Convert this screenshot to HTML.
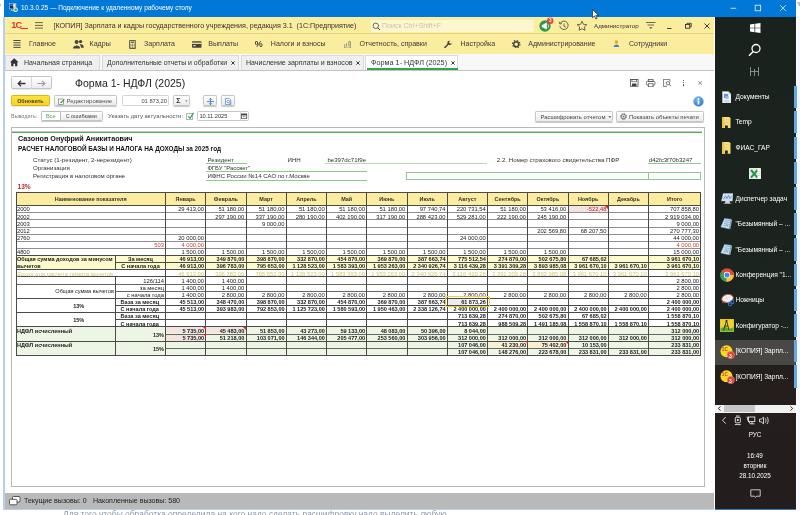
<!DOCTYPE html>
<html lang="ru"><head><meta charset="utf-8"><title>Форма 1- НДФЛ (2025)</title>
<style>
html,body{margin:0;padding:0;background:#fff}
body{width:800px;height:515px;position:relative;overflow:hidden;font-family:"Liberation Sans",sans-serif}
body div,body svg{position:absolute}
.t{white-space:nowrap;line-height:12px;height:12px}
#w{left:0;top:0;width:800px;height:515px;will-change:transform;overflow:hidden}
</style></head><body><div id="w">
<div style="left:0px;top:0px;width:800px;height:515px;background:#fff"></div>
<div style="left:4px;top:0px;width:791.7px;height:16.5px;background:#0078d7"></div>
<div class="t" style="left:21px;top:2.0px;font-size:6.5px;color:#fff;font-weight:400;">10.3.0.25 — Подключение к удаленному рабочему столу</div>
<svg style="left:725px;top:0" width="70" height="17" viewBox="0 0 70 17"><g stroke="#fff" stroke-width="0.75" fill="none"><path d="M5.500 8.300h5.700"/><rect x="30.200" y="5.200" width="5.500" height="5.600"/><path d="M55.200 5.300l5.600 5.600M60.800 5.300l-5.600 5.600"/></g></svg>
<svg style="left:8.700px;top:3.300px" width="9.500" height="9.300" viewBox="0 0 9.500 9.300"><rect x=".3" y=".3" width="6.600" height="5.600" fill="#1c2a3a" stroke="#c9d6e6" stroke-width=".6"/><rect x="1.300" y="1.300" width="2.600" height="1.800" fill="#2f7fe0"/><rect x="4.200" y=".8" width="2.400" height="4" fill="#e8edf4"/><path d="M2.500 6v1.600h3" stroke="#c9d6e6" stroke-width=".7" fill="none"/><circle cx="6.600" cy="6.800" r="2.300" fill="#f4f1e4"/><circle cx="6.700" cy="6.700" r="1.300" fill="#3aa845"/></svg>
<div style="left:2.9px;top:16.5px;width:2.1px;height:493.8px;background:#b6d1ef"></div>
<div style="left:2.9px;top:508.8px;width:711.6px;height:1.6px;background:#b6d1ef"></div>
<div style="left:5px;top:16.5px;width:709px;height:17.5px;background:#fbed9e"></div>
<div style="left:5px;top:33.2px;width:709px;height:0.8px;background:#e6d683"></div>
<div style="left:5px;top:34px;width:709px;height:20px;background:#fbed9e"></div>
<div style="left:5px;top:53.5px;width:709px;height:0.8px;background:#d9cc86"></div>
<div class="t" style="left:11.2px;top:19.3px;font-size:9.2px;color:#e2332f;font-weight:700;letter-spacing:-0.8px">1С</div>
<div style="left:19.5px;top:27.6px;width:8px;height:1.6px;background:#e2332f;border-radius:0 0 0 1px"></div>
<svg style="left:35px;top:21px" width="9" height="9" viewBox="0 0 9 9"><g stroke="#6a6544" stroke-width="1"><path d="M0 1.600h8M0 4.400h8M0 7.100h8"/></g></svg>
<div class="t" style="left:53.5px;top:19.5px;font-size:7.14px;color:#333;font-weight:400;white-space:pre">[КОПИЯ] Зарплата и кадры государственного учреждения, редакция 3.1  (1С:Предприятие)</div>
<div style="left:370.5px;top:20px;width:163.5px;height:11.5px;background:#fdf6cf;border-radius:1px"></div>
<svg style="left:372px;top:21.500px" width="9" height="9" viewBox="0 0 9 9"><circle cx="3.800" cy="3.800" r="2.700" fill="none" stroke="#444" stroke-width=".8"/><path d="M5.800 5.800l2.200 2.200" stroke="#444" stroke-width="1"/></svg>
<div class="t" style="left:382px;top:19.7px;font-size:7.05px;color:#c9c4a8;font-weight:400;">Поиск Ctrl+Shift+F</div>
<svg style="left:538.200px;top:16.300px" width="18" height="17" viewBox="0 0 18 17"><circle cx="7" cy="10" r="5.700" fill="#2f9a4b"/><path d="M3.800 9.200l5-2.700v7l-5-2.500z" fill="#fff"/><path d="M9.800 8.300a2 2 0 0 1 0 3.400" stroke="#fff" stroke-width=".7" fill="none"/><circle cx="12.200" cy="4.800" r="3.200" fill="#e8413a"/></svg>
<div class="t" style="left:450.4px;width:200px;top:15.2px;font-size:4.6px;color:#fff;font-weight:700;text-align:center;">3</div>
<svg style="left:558px;top:20px" width="12" height="12" viewBox="0 0 12 12"><path d="M2.300 3.200A4.200 4.200 0 1 1 1.800 6" fill="none" stroke="#444" stroke-width=".8"/><path d="M1.200 1.800l.6 2.200 2.200-.4" fill="none" stroke="#444" stroke-width=".8"/><path d="M6 3.500v2.700l1.800 1" fill="none" stroke="#444" stroke-width=".8"/></svg>
<svg style="left:575.600px;top:20px" width="12" height="12" viewBox="0 0 12 12"><path d="M6 1.200l1.450 3.100 3.350.4-2.500 2.300.7 3.300L6 8.700 3 10.300l.7-3.300L1.200 4.700l3.350-.4z" fill="none" stroke="#444" stroke-width=".8" stroke-linejoin="round"/></svg>
<div class="t" style="left:594px;top:19.5px;font-size:6.2px;color:#333;font-weight:400;">Администратор</div>
<svg style="left:645px;top:21px" width="12" height="10" viewBox="0 0 12 10"><g stroke="#444" stroke-width=".8"><path d="M1 1.500h9.500M2.500 4h6.500"/></g><path d="M4.300 6.300h3l-1.500 1.800z" fill="#444"/></svg>
<svg style="left:665px;top:21px" width="45" height="10" viewBox="0 0 45 10"><g stroke="#333" stroke-width=".9" fill="none"><path d="M2 7.500h4.500"/><rect x="20.500" y="3.500" width="4.300" height="3.700"/><path d="M22 3.500v-1.200h4.200v3.500h-1.400"/><path d="M39.500 2.500l5 5M44.500 2.500l-5 5"/></g></svg>
<div class="t" style="left:29px;top:38.3px;font-size:7.05px;color:#3a3a3a;font-weight:400;">Главное</div>
<svg style="left:13px;top:39px" width="8" height="9" viewBox="0 0 8 9"><g stroke="#4a4a4a" stroke-width="1"><path d="M.4 1.500h7.200M.4 3.800h7.200M.4 6.100h7.200M.4 8.400h7.200"/></g></svg>
<div class="t" style="left:89.6px;top:38.3px;font-size:7.05px;color:#3a3a3a;font-weight:400;">Кадры</div>
<svg style="left:73px;top:39px" width="11" height="10" viewBox="0 0 11 10"><g fill="#444"><circle cx="3.600" cy="3" r="2"/><circle cx="7.600" cy="2.600" r="1.700"/><path d="M0 9.500c0-4 7.200-4 7.200 0z"/><path d="M7.600 5.200c2.500 0 3.200 1.600 3.200 3.500H8c-.1-1.500-.6-2.600-1.600-3.200z"/></g></svg>
<div class="t" style="left:144px;top:38.3px;font-size:7.05px;color:#3a3a3a;font-weight:400;">Зарплата</div>
<svg style="left:129.3px;top:39.800px" width="7.200" height="9" viewBox="0 0 8 10"><rect x=".5" y=".5" width="7" height="9" rx=".6" fill="#fbed9e" stroke="#4a4a4a" stroke-width="1"/><path d="M1.800 2.400h4.400" stroke="#4a4a4a" stroke-width="1.300"/><path d="M1.500 4.700h5M1.500 6.400h5M1.500 8.100h5" stroke="#4a4a4a" stroke-width=".9" stroke-dasharray="1.200 .7"/></svg>
<div class="t" style="left:208.3px;top:38.3px;font-size:7.05px;color:#3a3a3a;font-weight:400;">Выплаты</div>
<svg style="left:192px;top:40.500px" width="10" height="8" viewBox="0 0 10 8"><rect x="0" y=".3" width="9.500" height="6.400" rx=".6" fill="#444"/><rect x="0" y="1.600" width="9.500" height="1.300" fill="#fbed9e"/><rect x="1.200" y="4.200" width="2.500" height="1" fill="#fbed9e"/></svg>
<div class="t" style="left:270.8px;top:38.3px;font-size:7.05px;color:#3a3a3a;font-weight:400;">Налоги и взносы</div>
<div class="t" style="left:254.8px;top:38.3px;font-size:9px;color:#444;font-weight:700;">%</div>
<div class="t" style="left:359.5px;top:38.3px;font-size:7.05px;color:#3a3a3a;font-weight:400;">Отчетность, справки</div>
<svg style="left:343.5px;top:40.500px" width="7.500" height="7.500" viewBox="0 0 8 8"><g fill="none" stroke="#777" stroke-width=".8"><path d="M.8 3.500v4h6V.6H5.200"/><path d="M2.800 2.300v3.500M5.200.6v5.200"/></g></svg>
<div class="t" style="left:460.4px;top:38.3px;font-size:7.05px;color:#3a3a3a;font-weight:400;">Настройка</div>
<svg style="left:444px;top:39.800px" width="8.500" height="8.500" viewBox="0 0 10 10"><path d="M1 8.800L5 4.800" stroke="#444" stroke-width="1.800" stroke-linecap="round"/><path d="M6.800 0.800a2.600 2.600 0 1 0 2.300 2.500l-1.600 1.200-1.500-1.200z" fill="#444"/></svg>
<div class="t" style="left:528.3px;top:38.3px;font-size:7.05px;color:#3a3a3a;font-weight:400;">Администрирование</div>
<svg style="left:512px;top:39.800px" width="8.500" height="8.500" viewBox="0 0 9 9"><circle cx="4.500" cy="4.500" r="2.600" fill="none" stroke="#444" stroke-width="1.500"/><circle cx="4.500" cy="4.500" r="3.900" fill="none" stroke="#444" stroke-width="1.300" stroke-dasharray="1.500 1.560"/></svg>
<div class="t" style="left:629px;top:38.3px;font-size:7.05px;color:#3a3a3a;font-weight:400;">Сотрудники</div>
<svg style="left:612.5px;top:39.800px" width="6.800" height="7.600" viewBox="0 0 8 10"><circle cx="4" cy="2.600" r="2.200" fill="#f0a020"/><path d="M.3 9.300c0-4.500 7.400-4.500 7.400 0z" fill="#3f7fd0"/></svg>
<div style="left:5px;top:54.3px;width:709px;height:15.7px;background:#f8f8f8"></div>
<div style="left:5px;top:69.9px;width:709px;height:0.8px;background:#c4c4c4"></div>
<div style="left:365.4px;top:54.6px;width:93px;height:15.3px;background:#fff;border:0.700px solid #d9d9d9;border-bottom:none;box-sizing:border-box"></div>
<div style="left:367px;top:68.2px;width:91px;height:1.5px;background:#2ca84a"></div>
<div style="left:5px;top:54.6px;width:95px;height:15.3px;background:#efefef;border:0.700px solid #d9d9d9;border-bottom:none;box-sizing:border-box"></div>
<div style="left:101.8px;top:54.6px;width:137.0px;height:15.3px;background:#efefef;border:0.700px solid #d9d9d9;border-bottom:none;box-sizing:border-box"></div>
<div style="left:240.6px;top:54.6px;width:123.00000000000003px;height:15.3px;background:#efefef;border:0.700px solid #d9d9d9;border-bottom:none;box-sizing:border-box"></div>
<svg style="left:9.500px;top:57.500px" width="9" height="9" viewBox="0 0 9 9"><path d="M4.200 0.300L0 4.300h1.200v4h2.200V5.700h1.700v2.600h2.200v-4h1.200z" fill="#333"/></svg>
<div class="t" style="left:24px;top:56.6px;font-size:7.05px;color:#333;font-weight:400;">Начальная страница</div>
<div class="t" style="left:107px;top:56.6px;font-size:6.95px;color:#333;font-weight:400;">Дополнительные отчеты и обработки</div>
<div class="t" style="left:246px;top:56.6px;font-size:7.05px;color:#333;font-weight:400;">Начисление зарплаты и взносов</div>
<div class="t" style="left:371px;top:56.6px;font-size:7.25px;color:#333;font-weight:400;">Форма 1- НДФЛ (2025)</div>
<svg style="left:231px;top:60.800px" width="4" height="4" viewBox="0 0 4 4"><path d="M.4.400l3.200 3.200M3.600.400L.4 3.600" stroke="#333" stroke-width=".95"/></svg>
<svg style="left:356px;top:60.800px" width="4" height="4" viewBox="0 0 4 4"><path d="M.4.400l3.200 3.200M3.600.400L.4 3.600" stroke="#333" stroke-width=".95"/></svg>
<svg style="left:450.5px;top:60.800px" width="4" height="4" viewBox="0 0 4 4"><path d="M.4.400l3.200 3.200M3.600.400L.4 3.600" stroke="#333" stroke-width=".95"/></svg>
<div style="left:5px;top:70.5px;width:709px;height:422px;background:#fff"></div>
<div style="left:11.3px;top:76.3px;width:40.5px;height:13.2px;background:linear-gradient(#fff,#ececec);border:0.800px solid #c4c4c4;border-radius:1.500px;box-sizing:border-box;box-shadow:0 .5px .5px rgba(0,0,0,.15)"></div>
<div style="left:31px;top:77px;width:0.7px;height:11.5px;background:#d8d8d8"></div>
<svg style="left:17px;top:79.500px" width="9" height="7" viewBox="0 0 9 7"><path d="M8.500 3.500H1.500M4 .800L1.200 3.500 4 6.200" fill="none" stroke="#333" stroke-width="1.300"/></svg>
<svg style="left:37px;top:79.500px" width="9" height="7" viewBox="0 0 9 7"><path d="M.5 3.500H7.500M5 .800L7.800 3.500 5 6.200" fill="none" stroke="#999" stroke-width="1.100"/></svg>
<div class="t" style="left:75px;top:76.8px;font-size:10.5px;color:#222;font-weight:400;">Форма 1- НДФЛ (2025)</div>
<svg style="left:630px;top:78.800px" width="8.600" height="7.800" viewBox="0 0 9 9" preserveAspectRatio="none"><rect x=".4" y=".4" width="8" height="8" fill="none" stroke="#444" stroke-width=".8"/><rect x="2" y=".4" width="4.800" height="2.800" fill="none" stroke="#444" stroke-width=".7"/><rect x="2" y="5.200" width="4.800" height="3.200" fill="#444"/></svg>
<svg style="left:646.200px;top:78.500px" width="10" height="8.500" viewBox="0 0 11 10" preserveAspectRatio="none"><rect x="2.500" y=".4" width="5.200" height="2.400" fill="none" stroke="#444" stroke-width=".8"/><rect x=".4" y="2.800" width="9.400" height="4.400" rx="1" fill="none" stroke="#444" stroke-width=".8"/><rect x="2.500" y="5.600" width="5.200" height="3.600" fill="#fff" stroke="#444" stroke-width=".8"/></svg>
<svg style="left:663px;top:78.500px" width="9.300" height="8.800" viewBox="0 0 10 10" preserveAspectRatio="none"><path d="M7.400 3V.4H.4v8h4" fill="none" stroke="#444" stroke-width=".8"/><circle cx="5.300" cy="4.800" r="1.900" fill="none" stroke="#444" stroke-width=".8"/><path d="M6.700 6.200l1.800 1.800" stroke="#444" stroke-width="1"/></svg>
<div style="left:683.2px;top:79.8px;width:1.2px;height:1.2px;background:#3a3a3a;border-radius:50%"></div>
<div style="left:683.2px;top:82.1px;width:1.2px;height:1.2px;background:#3a3a3a;border-radius:50%"></div>
<div style="left:683.2px;top:84.4px;width:1.2px;height:1.2px;background:#3a3a3a;border-radius:50%"></div>
<svg style="left:698px;top:80.600px" width="4.400" height="4.200" viewBox="0 0 5 5"><path d="M.3.300l4.400 4.400M4.700.300L.3 4.700" stroke="#555" stroke-width=".8"/></svg>
<div style="left:11.3px;top:95.2px;width:38.3px;height:10.8px;background:linear-gradient(#fde240,#f6d32c);border:0.800px solid #dcb90a;border-radius:1.500px;box-sizing:border-box;box-shadow:0 .5px .5px rgba(0,0,0,.2)"></div>
<div class="t" style="left:-69.6px;width:200px;top:94.6px;font-size:5.35px;color:#4a4220;font-weight:700;text-align:center;">Обновить</div>
<div style="left:54.2px;top:95.2px;width:63.2px;height:10.8px;border:0.800px solid #c6c6c6;border-radius:1.500px;box-sizing:border-box;background:linear-gradient(#fff,#ebebeb);box-shadow:0 .8px .8px rgba(0,0,0,.22)"></div>
<svg style="left:57.500px;top:97.500px" width="7" height="7" viewBox="0 0 7 7"><rect x=".3" y="1" width="5" height="5.500" fill="#fff" stroke="#666" stroke-width=".6"/><path d="M2 4.800L5.800 1l.9.900L3 5.600z" fill="#4a9c4a"/></svg>
<div class="t" style="left:66.5px;top:94.6px;font-size:6px;color:#555;font-weight:400;">Редактирование</div>
<div style="left:122px;top:95.2px;width:46.6px;height:10.8px;border:0.800px solid #d4d4d4;border-radius:1.500px;box-sizing:border-box;background:#fff"></div>
<div class="t" style="right:633px;top:94.6px;font-size:5.75px;color:#444;font-weight:400;text-align:right;">01 873,20</div>
<div style="left:173.1px;top:95.2px;width:17.2px;height:10.8px;border:0.800px solid #c6c6c6;border-radius:1.500px;box-sizing:border-box;background:linear-gradient(#fff,#ebebeb);box-shadow:0 .8px .8px rgba(0,0,0,.22)"></div>
<div class="t" style="left:176.3px;top:94.5px;font-size:7.2px;color:#333;font-weight:700;">Σ</div>
<svg style="left:184.500px;top:100.200px" width="3.200" height="2.400" viewBox="0 0 4 3"><path d="M.3.500h3L1.800 2.300z" fill="#555"/></svg>
<div style="left:202.7px;top:95.2px;width:14.4px;height:10.8px;border:0.800px solid #c6c6c6;border-radius:1.500px;box-sizing:border-box;background:linear-gradient(#fff,#ebebeb);box-shadow:0 .8px .8px rgba(0,0,0,.22)"></div>
<svg style="left:206.500px;top:97.500px" width="7" height="7" viewBox="0 0 7 7"><path d="M3.500 0v7M0 3.500h7" stroke="#3a78c2" stroke-width=".8"/><path d="M2 1.800L3.500.300 5 1.800M2 5.200l1.500 1.500L5 5.200" fill="none" stroke="#3a78c2" stroke-width=".8"/></svg>
<div style="left:221.3px;top:95.2px;width:14px;height:10.8px;border:0.800px solid #c6c6c6;border-radius:1.500px;box-sizing:border-box;background:linear-gradient(#fff,#ebebeb);box-shadow:0 .8px .8px rgba(0,0,0,.22)"></div>
<svg style="left:224.500px;top:97.500px" width="7" height="7" viewBox="0 0 7 7"><path d="M.5.400h3.700l1.600 1.600v4.600H.5z" fill="#fff" stroke="#3a78c2" stroke-width=".7"/><circle cx="3.200" cy="3.600" r="1.300" fill="none" stroke="#3a78c2" stroke-width=".7"/><path d="M4.100 4.600l1.400 1.400" stroke="#3a78c2" stroke-width=".8"/></svg>
<svg style="left:692.500px;top:95.500px" width="11" height="11" viewBox="0 0 11 11"><defs><radialGradient id="ig" cx=".4" cy=".3" r=".8"><stop offset="0" stop-color="#7db9f0"/><stop offset="1" stop-color="#1f6fc4"/></radialGradient></defs><circle cx="5.500" cy="5.500" r="5" fill="url(#ig)" stroke="#9cc3e8" stroke-width=".6"/><circle cx="5.500" cy="3" r=".9" fill="#fff"/><rect x="4.700" y="4.500" width="1.600" height="4" fill="#fff"/></svg>
<div class="t" style="left:11px;top:110.2px;font-size:5.45px;color:#777;font-weight:400;">Выводить:</div>
<div style="left:41.3px;top:110.7px;width:62px;height:10.8px;border:0.800px solid #c6c6c6;border-radius:1.500px;box-sizing:border-box;background:linear-gradient(#fff,#ebebeb);box-shadow:0 .8px .8px rgba(0,0,0,.22)"></div>
<div style="left:41.3px;top:110.7px;width:19.5px;height:10.8px;background:#fff;border:0.800px solid #bbb;border-radius:1.500px 0 0 1.500px;box-sizing:border-box"></div>
<div class="t" style="left:-49.3px;width:200px;top:110.2px;font-size:5.6px;color:#4fa85c;font-weight:400;text-align:center;">Все</div>
<div class="t" style="left:-18.799999999999997px;width:200px;top:110.2px;font-size:5.4px;color:#444;font-weight:400;text-align:center;">С ошибками</div>
<div class="t" style="left:108px;top:110.2px;font-size:5.9px;color:#555;font-weight:400;">Указать дату актуальности:</div>
<div style="left:186px;top:112.7px;width:7px;height:7px;border:0.700px solid #b5b5b5;box-sizing:border-box;background:#fff"></div>
<svg style="left:186.500px;top:111.500px" width="8" height="8" viewBox="0 0 8 8"><path d="M1.300 4.300l1.800 2L6.500.800" fill="none" stroke="#2e9e44" stroke-width="1.200"/></svg>
<div style="left:197.3px;top:110.8px;width:52px;height:10.3px;border:0.800px solid #c8c8c8;border-radius:1.500px;box-sizing:border-box;background:#fff"></div>
<div class="t" style="left:199.4px;top:110.1px;font-size:5.7px;color:#333;font-weight:400;">10.11.2025</div>
<div style="left:239.7px;top:111.3px;width:0.6px;height:9.3px;background:#d6d6d6"></div>
<svg style="left:241.300px;top:112.500px" width="6.500" height="6.500" viewBox="0 0 7 7"><rect x=".4" y="1" width="5.800" height="5.200" fill="#fff" stroke="#444" stroke-width=".8"/><rect x=".4" y="1" width="5.800" height="1.600" fill="#444"/><rect x="2" y="3.600" width="1" height="1" fill="#444"/><rect x="3.700" y="3.600" width="1" height="1" fill="#444"/></svg>
<div style="left:534.5px;top:111px;width:78.5px;height:11px;border:0.800px solid #c6c6c6;border-radius:1.500px;box-sizing:border-box;background:linear-gradient(#fff,#ebebeb);box-shadow:0 .8px .8px rgba(0,0,0,.22)"></div>
<div class="t" style="left:540.5px;top:110.5px;font-size:5.9px;color:#444;font-weight:400;">Расшифровать отчетом</div>
<svg style="left:607.500px;top:116px" width="4" height="3" viewBox="0 0 4 3"><path d="M.3.300h3L1.800 2z" fill="#555"/></svg>
<div style="left:616px;top:111px;width:88px;height:11px;border:0.800px solid #c6c6c6;border-radius:1.500px;box-sizing:border-box;background:linear-gradient(#fff,#ebebeb);box-shadow:0 .8px .8px rgba(0,0,0,.22)"></div>
<svg style="left:619.500px;top:113px" width="7" height="7" viewBox="0 0 7 7"><circle cx="3.500" cy="3.500" r="2.200" fill="none" stroke="#555" stroke-width=".8"/><circle cx="3.500" cy="3.500" r="3" fill="none" stroke="#555" stroke-width=".9" stroke-dasharray="1 1.350"/><circle cx="3.500" cy="3.500" r=".8" fill="#555"/></svg>
<div class="t" style="left:629px;top:110.5px;font-size:5.9px;color:#444;font-weight:400;">Показать объекты печати</div>
<div style="left:10.5px;top:126.5px;width:694.5px;height:360.5px;border:0.800px solid #b9b9b9;box-sizing:border-box;background:#fff"></div>
<div style="left:11.5px;top:130.9px;width:690.5px;height:0.7px;background:#c8c8c8"></div>
<div style="left:11.5px;top:131.8px;width:690.5px;height:1.1px;background:#4db35a"></div>
<div class="t" style="left:18px;top:133.0px;font-size:7.2px;color:#111;font-weight:700;">Сазонов Онуфрий Аникитаович</div>
<div class="t" style="left:18px;top:143.0px;font-size:6.42px;color:#111;font-weight:700;">РАСЧЕТ НАЛОГОВОЙ БАЗЫ И НАЛОГА НА ДОХОДЫ за 2025 год</div>
<div class="t" style="left:33px;top:154.0px;font-size:6.2px;color:#333;font-weight:400;">Статус (1-резидент, 2-нерезидент)</div>
<div class="t" style="left:33px;top:162.0px;font-size:6.1px;color:#333;font-weight:400;">Организация</div>
<div class="t" style="left:33px;top:170.4px;font-size:6.06px;color:#333;font-weight:400;">Регистрация в налоговом органе</div>
<div class="t" style="left:207.4px;top:154.0px;font-size:6.1px;color:#333;font-weight:400;">Резидент</div>
<div class="t" style="left:207.4px;top:162.0px;font-size:5.9px;color:#333;font-weight:400;">ФГБУ &quot;Рассвет&quot;</div>
<div class="t" style="left:207.4px;top:170.4px;font-size:6.05px;color:#333;font-weight:400;">ИФНС России №14 САО по г.Москве</div>
<div class="t" style="left:287.5px;top:154.0px;font-size:6.1px;color:#333;font-weight:400;">ИНН</div>
<div class="t" style="left:327.4px;top:154.0px;font-size:6.1px;color:#333;font-weight:400;">be397dc71f9e</div>
<div class="t" style="left:496.8px;top:153.5px;font-size:6.16px;color:#333;font-weight:400;">2.2. Номер страхового свидетельства ПФР</div>
<div class="t" style="left:648.8px;top:153.5px;font-size:6.1px;color:#333;font-weight:400;">d42fc3f70b3247</div>
<div style="left:205.6px;top:163px;width:41px;height:0.8px;background:#8fca8a"></div>
<div style="left:325px;top:163px;width:162px;height:0.8px;background:#b5d9b0"></div>
<div style="left:648px;top:163px;width:53px;height:0.8px;background:#8fca8a"></div>
<div style="left:205.6px;top:171.3px;width:161.5px;height:0.8px;background:#8fca8a"></div>
<div style="left:205.6px;top:180.3px;width:161.5px;height:0.8px;background:#8fca8a"></div>
<div style="left:406px;top:172px;width:295px;height:8px;border:0.800px solid #8fca8a;box-sizing:border-box"></div>
<div style="left:648px;top:172px;width:0.8px;height:8px;background:#8fca8a"></div>
<div class="t" style="left:17.5px;top:180.5px;font-size:6.6px;color:#c0272d;font-weight:700;">13%</div>
<div style="left:15.9px;top:192.4px;width:684.9px;height:13.099999999999994px;background:#fbeca0"></div>
<div class="t" style="left:-9.299999999999997px;width:200px;top:192.8px;font-size:5.45px;color:#333;font-weight:700;text-align:center;">Наименование показателя</div>
<div class="t" style="left:85.625px;width:200px;top:192.8px;font-size:5.45px;color:#333;font-weight:700;text-align:center;">Январь</div>
<div class="t" style="left:125.875px;width:200px;top:192.8px;font-size:5.45px;color:#333;font-weight:700;text-align:center;">Февраль</div>
<div class="t" style="left:166.125px;width:200px;top:192.8px;font-size:5.45px;color:#333;font-weight:700;text-align:center;">Март</div>
<div class="t" style="left:206.375px;width:200px;top:192.8px;font-size:5.45px;color:#333;font-weight:700;text-align:center;">Апрель</div>
<div class="t" style="left:246.625px;width:200px;top:192.8px;font-size:5.45px;color:#333;font-weight:700;text-align:center;">Май</div>
<div class="t" style="left:286.875px;width:200px;top:192.8px;font-size:5.45px;color:#333;font-weight:700;text-align:center;">Июнь</div>
<div class="t" style="left:327.125px;width:200px;top:192.8px;font-size:5.45px;color:#333;font-weight:700;text-align:center;">Июль</div>
<div class="t" style="left:367.375px;width:200px;top:192.8px;font-size:5.45px;color:#333;font-weight:700;text-align:center;">Август</div>
<div class="t" style="left:407.625px;width:200px;top:192.8px;font-size:5.45px;color:#333;font-weight:700;text-align:center;">Сентябрь</div>
<div class="t" style="left:447.875px;width:200px;top:192.8px;font-size:5.45px;color:#333;font-weight:700;text-align:center;">Октябрь</div>
<div class="t" style="left:488.125px;width:200px;top:192.8px;font-size:5.45px;color:#333;font-weight:700;text-align:center;">Ноябрь</div>
<div class="t" style="left:528.375px;width:200px;top:192.8px;font-size:5.45px;color:#333;font-weight:700;text-align:center;">Декабрь</div>
<div class="t" style="left:574.65px;width:200px;top:192.8px;font-size:5.45px;color:#333;font-weight:700;text-align:center;">Итого</div>
<div style="left:15.9px;top:255.46666666666664px;width:684.9px;height:14.276190476190473px;background:#fbfacb"></div>
<div style="left:15.9px;top:326.847619047619px;width:684.9px;height:28.552380952380947px;background:#edf6e4"></div>
<div style="left:568.5px;top:206.0px;width:39.25px;height:6.138095238095237px;background:repeating-linear-gradient(135deg,#f3dcdc 0,#f3dcdc .7px,#f1ebe6 .7px,#f1ebe6 1.400px)"></div>
<div style="left:166.0px;top:327.347619047619px;width:39.25px;height:6.138095238095237px;background:repeating-linear-gradient(135deg,#f3dcdc 0,#f3dcdc .7px,#f1ebe6 .7px,#f1ebe6 1.400px)"></div>
<div style="left:206.25px;top:327.347619047619px;width:39.25px;height:6.138095238095237px;background:repeating-linear-gradient(135deg,#f3dcdc 0,#f3dcdc .7px,#f1ebe6 .7px,#f1ebe6 1.400px)"></div>
<div style="left:166.0px;top:334.48571428571427px;width:39.25px;height:6.138095238095237px;background:repeating-linear-gradient(135deg,#f3dcdc 0,#f3dcdc .7px,#f1ebe6 .7px,#f1ebe6 1.400px)"></div>
<div style="left:488.0px;top:341.6238095238095px;width:39.25px;height:6.138095238095237px;background:#fbefd2"></div>
<div style="left:528.25px;top:341.6238095238095px;width:39.25px;height:6.138095238095237px;background:#fbefd2"></div>
<div style="left:448.05px;top:299.0952380952381px;width:19px;height:5.538095238095236px;background:#ececec"></div>
<div style="left:15.9px;top:192.0px;width:684.9px;height:0.8px;background:#4a4a4a"></div>
<div style="left:15.9px;top:205.1px;width:684.9px;height:0.8px;background:#4a4a4a"></div>
<div style="left:15.9px;top:212.23809523809524px;width:684.9px;height:0.8px;background:#8e8e8e"></div>
<div style="left:15.9px;top:219.37619047619046px;width:684.9px;height:0.8px;background:#8e8e8e"></div>
<div style="left:15.9px;top:226.5142857142857px;width:684.9px;height:0.8px;background:#8e8e8e"></div>
<div style="left:15.9px;top:233.65238095238095px;width:684.9px;height:0.8px;background:#8e8e8e"></div>
<div style="left:15.9px;top:240.79047619047617px;width:684.9px;height:0.8px;background:#8e8e8e"></div>
<div style="left:15.9px;top:247.92857142857142px;width:684.9px;height:0.8px;background:#8e8e8e"></div>
<div style="left:15.9px;top:254.96666666666664px;width:684.9px;height:1.0px;background:#4a4a4a"></div>
<div style="left:115.5px;top:262.1047619047619px;width:585.3px;height:1.0px;background:#4a4a4a"></div>
<div style="left:15.9px;top:269.24285714285713px;width:684.9px;height:1.0px;background:#4a4a4a"></div>
<div style="left:15.9px;top:276.38095238095235px;width:684.9px;height:1.0px;background:#4a4a4a"></div>
<div style="left:15.9px;top:283.6190476190476px;width:684.9px;height:0.8px;background:#666"></div>
<div style="left:115.5px;top:290.75714285714287px;width:585.3px;height:0.8px;background:#666"></div>
<div style="left:15.9px;top:297.79523809523806px;width:684.9px;height:1.0px;background:#4a4a4a"></div>
<div style="left:115.5px;top:304.9333333333333px;width:585.3px;height:1.0px;background:#4a4a4a"></div>
<div style="left:15.9px;top:312.07142857142856px;width:684.9px;height:1.0px;background:#4a4a4a"></div>
<div style="left:115.5px;top:319.2095238095238px;width:585.3px;height:1.0px;background:#4a4a4a"></div>
<div style="left:15.9px;top:326.347619047619px;width:684.9px;height:1.0px;background:#4a4a4a"></div>
<div style="left:165.5px;top:333.5857142857143px;width:535.3px;height:0.8px;background:#666"></div>
<div style="left:15.9px;top:340.6238095238095px;width:684.9px;height:1.0px;background:#4a4a4a"></div>
<div style="left:165.5px;top:347.8619047619047px;width:535.3px;height:0.8px;background:#666"></div>
<div style="left:15.9px;top:354.9px;width:684.9px;height:1.0px;background:#4a4a4a"></div>
<div style="left:15.5px;top:192.4px;width:0.8px;height:162.99999999999997px;background:#4a4a4a"></div>
<div style="left:700.4px;top:192.4px;width:0.8px;height:162.99999999999997px;background:#4a4a4a"></div>
<div style="left:165.1px;top:192.4px;width:0.8px;height:162.99999999999997px;background:#4a4a4a"></div>
<div style="left:205.35px;top:192.4px;width:0.8px;height:162.99999999999997px;background:#4a4a4a"></div>
<div style="left:245.6px;top:192.4px;width:0.8px;height:162.99999999999997px;background:#4a4a4a"></div>
<div style="left:285.85px;top:192.4px;width:0.8px;height:162.99999999999997px;background:#4a4a4a"></div>
<div style="left:326.1px;top:192.4px;width:0.8px;height:162.99999999999997px;background:#4a4a4a"></div>
<div style="left:366.35px;top:192.4px;width:0.8px;height:162.99999999999997px;background:#4a4a4a"></div>
<div style="left:406.6px;top:192.4px;width:0.8px;height:162.99999999999997px;background:#4a4a4a"></div>
<div style="left:446.85px;top:192.4px;width:0.8px;height:162.99999999999997px;background:#4a4a4a"></div>
<div style="left:487.1px;top:192.4px;width:0.8px;height:162.99999999999997px;background:#4a4a4a"></div>
<div style="left:527.35px;top:192.4px;width:0.8px;height:162.99999999999997px;background:#4a4a4a"></div>
<div style="left:567.6px;top:192.4px;width:0.8px;height:162.99999999999997px;background:#4a4a4a"></div>
<div style="left:607.85px;top:192.4px;width:0.8px;height:162.99999999999997px;background:#4a4a4a"></div>
<div style="left:648.1px;top:192.4px;width:0.8px;height:162.99999999999997px;background:#4a4a4a"></div>
<div style="left:115.1px;top:255.46666666666664px;width:0.8px;height:14.276190476190493px;background:#4a4a4a"></div>
<div style="left:115.1px;top:276.88095238095235px;width:0.8px;height:78.51904761904763px;background:#4a4a4a"></div>
<div class="t" style="right:595.95px;top:203.36904761904762px;font-size:5.84px;color:#222;font-weight:400;text-align:right;">29 413,00</div>
<div class="t" style="right:555.7px;top:203.36904761904762px;font-size:5.84px;color:#222;font-weight:400;text-align:right;">51 180,00</div>
<div class="t" style="right:515.45px;top:203.36904761904762px;font-size:5.84px;color:#222;font-weight:400;text-align:right;">51 180,00</div>
<div class="t" style="right:475.2px;top:203.36904761904762px;font-size:5.84px;color:#222;font-weight:400;text-align:right;">51 180,00</div>
<div class="t" style="right:434.95px;top:203.36904761904762px;font-size:5.84px;color:#222;font-weight:400;text-align:right;">51 180,00</div>
<div class="t" style="right:394.7px;top:203.36904761904762px;font-size:5.84px;color:#222;font-weight:400;text-align:right;">51 180,00</div>
<div class="t" style="right:354.45px;top:203.36904761904762px;font-size:5.84px;color:#222;font-weight:400;text-align:right;">97 740,74</div>
<div class="t" style="right:314.2px;top:203.36904761904762px;font-size:5.84px;color:#222;font-weight:400;text-align:right;">220 731,54</div>
<div class="t" style="right:273.95000000000005px;top:203.36904761904762px;font-size:5.84px;color:#222;font-weight:400;text-align:right;">51 180,00</div>
<div class="t" style="right:233.70000000000005px;top:203.36904761904762px;font-size:5.84px;color:#222;font-weight:400;text-align:right;">53 416,00</div>
<div class="t" style="right:193.45000000000005px;top:203.36904761904762px;font-size:5.84px;color:#c0272d;font-weight:400;text-align:right;">-522,48</div>
<div class="t" style="right:100.90000000000009px;top:203.36904761904762px;font-size:5.84px;color:#222;font-weight:400;text-align:right;">707 858,80</div>
<div class="t" style="right:555.7px;top:210.50714285714287px;font-size:5.84px;color:#222;font-weight:400;text-align:right;">297 190,00</div>
<div class="t" style="right:515.45px;top:210.50714285714287px;font-size:5.84px;color:#222;font-weight:400;text-align:right;">337 190,00</div>
<div class="t" style="right:475.2px;top:210.50714285714287px;font-size:5.84px;color:#222;font-weight:400;text-align:right;">280 190,00</div>
<div class="t" style="right:434.95px;top:210.50714285714287px;font-size:5.84px;color:#222;font-weight:400;text-align:right;">402 190,00</div>
<div class="t" style="right:394.7px;top:210.50714285714287px;font-size:5.84px;color:#222;font-weight:400;text-align:right;">317 190,00</div>
<div class="t" style="right:354.45px;top:210.50714285714287px;font-size:5.84px;color:#222;font-weight:400;text-align:right;">288 423,00</div>
<div class="t" style="right:314.2px;top:210.50714285714287px;font-size:5.84px;color:#222;font-weight:400;text-align:right;">529 281,00</div>
<div class="t" style="right:273.95000000000005px;top:210.50714285714287px;font-size:5.84px;color:#222;font-weight:400;text-align:right;">222 190,00</div>
<div class="t" style="right:233.70000000000005px;top:210.50714285714287px;font-size:5.84px;color:#222;font-weight:400;text-align:right;">245 190,00</div>
<div class="t" style="right:100.90000000000009px;top:210.50714285714287px;font-size:5.84px;color:#222;font-weight:400;text-align:right;">2 919 034,00</div>
<div class="t" style="right:515.45px;top:217.64523809523808px;font-size:5.84px;color:#222;font-weight:400;text-align:right;">9 000,00</div>
<div class="t" style="right:100.90000000000009px;top:217.64523809523808px;font-size:5.84px;color:#222;font-weight:400;text-align:right;">9 000,00</div>
<div class="t" style="right:233.70000000000005px;top:224.78333333333333px;font-size:5.84px;color:#222;font-weight:400;text-align:right;">202 569,80</div>
<div class="t" style="right:193.45000000000005px;top:224.78333333333333px;font-size:5.84px;color:#222;font-weight:400;text-align:right;">68 207,50</div>
<div class="t" style="right:100.90000000000009px;top:224.78333333333333px;font-size:5.84px;color:#222;font-weight:400;text-align:right;">270 777,30</div>
<div class="t" style="right:595.95px;top:231.92142857142858px;font-size:5.84px;color:#222;font-weight:400;text-align:right;">20 000,00</div>
<div class="t" style="right:314.2px;top:231.92142857142858px;font-size:5.84px;color:#222;font-weight:400;text-align:right;">24 000,00</div>
<div class="t" style="right:100.90000000000009px;top:231.92142857142858px;font-size:5.84px;color:#222;font-weight:400;text-align:right;">44 000,00</div>
<div class="t" style="right:595.95px;top:239.0595238095238px;font-size:5.84px;color:#d23b2f;font-weight:400;text-align:right;">4 000,00</div>
<div class="t" style="right:100.90000000000009px;top:239.0595238095238px;font-size:5.84px;color:#d23b2f;font-weight:400;text-align:right;">4 000,00</div>
<div class="t" style="right:595.95px;top:246.19761904761904px;font-size:5.84px;color:#222;font-weight:400;text-align:right;">1 500,00</div>
<div class="t" style="right:555.7px;top:246.19761904761904px;font-size:5.84px;color:#222;font-weight:400;text-align:right;">1 500,00</div>
<div class="t" style="right:515.45px;top:246.19761904761904px;font-size:5.84px;color:#222;font-weight:400;text-align:right;">1 500,00</div>
<div class="t" style="right:475.2px;top:246.19761904761904px;font-size:5.84px;color:#222;font-weight:400;text-align:right;">1 500,00</div>
<div class="t" style="right:434.95px;top:246.19761904761904px;font-size:5.84px;color:#222;font-weight:400;text-align:right;">1 500,00</div>
<div class="t" style="right:394.7px;top:246.19761904761904px;font-size:5.84px;color:#222;font-weight:400;text-align:right;">1 500,00</div>
<div class="t" style="right:354.45px;top:246.19761904761904px;font-size:5.84px;color:#222;font-weight:400;text-align:right;">1 500,00</div>
<div class="t" style="right:314.2px;top:246.19761904761904px;font-size:5.84px;color:#222;font-weight:400;text-align:right;">1 500,00</div>
<div class="t" style="right:273.95000000000005px;top:246.19761904761904px;font-size:5.84px;color:#222;font-weight:400;text-align:right;">1 500,00</div>
<div class="t" style="right:233.70000000000005px;top:246.19761904761904px;font-size:5.84px;color:#222;font-weight:400;text-align:right;">1 500,00</div>
<div class="t" style="right:100.90000000000009px;top:246.19761904761904px;font-size:5.84px;color:#222;font-weight:400;text-align:right;">15 000,00</div>
<div class="t" style="right:595.95px;top:253.3357142857143px;font-size:5.55px;color:#222;font-weight:700;text-align:right;">46 913,00</div>
<div class="t" style="right:555.7px;top:253.3357142857143px;font-size:5.55px;color:#222;font-weight:700;text-align:right;">349 870,00</div>
<div class="t" style="right:515.45px;top:253.3357142857143px;font-size:5.55px;color:#222;font-weight:700;text-align:right;">398 870,00</div>
<div class="t" style="right:475.2px;top:253.3357142857143px;font-size:5.55px;color:#222;font-weight:700;text-align:right;">332 870,00</div>
<div class="t" style="right:434.95px;top:253.3357142857143px;font-size:5.55px;color:#222;font-weight:700;text-align:right;">454 870,00</div>
<div class="t" style="right:394.7px;top:253.3357142857143px;font-size:5.55px;color:#222;font-weight:700;text-align:right;">369 870,00</div>
<div class="t" style="right:354.45px;top:253.3357142857143px;font-size:5.55px;color:#222;font-weight:700;text-align:right;">387 663,74</div>
<div class="t" style="right:314.2px;top:253.3357142857143px;font-size:5.55px;color:#222;font-weight:700;text-align:right;">775 512,54</div>
<div class="t" style="right:273.95000000000005px;top:253.3357142857143px;font-size:5.55px;color:#222;font-weight:700;text-align:right;">274 870,00</div>
<div class="t" style="right:233.70000000000005px;top:253.3357142857143px;font-size:5.55px;color:#222;font-weight:700;text-align:right;">502 675,80</div>
<div class="t" style="right:193.45000000000005px;top:253.3357142857143px;font-size:5.55px;color:#222;font-weight:700;text-align:right;">67 685,02</div>
<div class="t" style="right:100.90000000000009px;top:253.3357142857143px;font-size:5.55px;color:#222;font-weight:700;text-align:right;">3 961 670,10</div>
<div class="t" style="right:595.95px;top:260.47380952380956px;font-size:5.55px;color:#222;font-weight:700;text-align:right;">46 913,00</div>
<div class="t" style="right:555.7px;top:260.47380952380956px;font-size:5.55px;color:#222;font-weight:700;text-align:right;">396 783,00</div>
<div class="t" style="right:515.45px;top:260.47380952380956px;font-size:5.55px;color:#222;font-weight:700;text-align:right;">795 653,00</div>
<div class="t" style="right:475.2px;top:260.47380952380956px;font-size:5.55px;color:#222;font-weight:700;text-align:right;">1 128 523,00</div>
<div class="t" style="right:434.95px;top:260.47380952380956px;font-size:5.55px;color:#222;font-weight:700;text-align:right;">1 583 393,00</div>
<div class="t" style="right:394.7px;top:260.47380952380956px;font-size:5.55px;color:#222;font-weight:700;text-align:right;">1 953 263,00</div>
<div class="t" style="right:354.45px;top:260.47380952380956px;font-size:5.55px;color:#222;font-weight:700;text-align:right;">2 340 926,74</div>
<div class="t" style="right:314.2px;top:260.47380952380956px;font-size:5.55px;color:#222;font-weight:700;text-align:right;">3 116 439,28</div>
<div class="t" style="right:273.95000000000005px;top:260.47380952380956px;font-size:5.55px;color:#222;font-weight:700;text-align:right;">3 391 309,28</div>
<div class="t" style="right:233.70000000000005px;top:260.47380952380956px;font-size:5.55px;color:#222;font-weight:700;text-align:right;">3 893 985,08</div>
<div class="t" style="right:193.45000000000005px;top:260.47380952380956px;font-size:5.55px;color:#222;font-weight:700;text-align:right;">3 961 670,10</div>
<div class="t" style="right:153.20000000000005px;top:260.47380952380956px;font-size:5.55px;color:#222;font-weight:700;text-align:right;">3 961 670,10</div>
<div class="t" style="right:100.90000000000009px;top:260.47380952380956px;font-size:5.55px;color:#222;font-weight:700;text-align:right;">3 961 670,10</div>
<div class="t" style="right:595.95px;top:267.6119047619048px;font-size:5.84px;color:#d2cc72;font-weight:400;text-align:right;">46 913,00</div>
<div class="t" style="right:555.7px;top:267.6119047619048px;font-size:5.84px;color:#d2cc72;font-weight:400;text-align:right;">396 783,00</div>
<div class="t" style="right:515.45px;top:267.6119047619048px;font-size:5.84px;color:#d2cc72;font-weight:400;text-align:right;">795 653,00</div>
<div class="t" style="right:475.2px;top:267.6119047619048px;font-size:5.84px;color:#d2cc72;font-weight:400;text-align:right;">1 128 523,00</div>
<div class="t" style="right:434.95px;top:267.6119047619048px;font-size:5.84px;color:#d2cc72;font-weight:400;text-align:right;">1 583 393,00</div>
<div class="t" style="right:394.7px;top:267.6119047619048px;font-size:5.84px;color:#d2cc72;font-weight:400;text-align:right;">1 953 263,00</div>
<div class="t" style="right:354.45px;top:267.6119047619048px;font-size:5.84px;color:#d2cc72;font-weight:400;text-align:right;">2 340 926,74</div>
<div class="t" style="right:314.2px;top:267.6119047619048px;font-size:5.84px;color:#d2cc72;font-weight:400;text-align:right;">3 116 439,28</div>
<div class="t" style="right:273.95000000000005px;top:267.6119047619048px;font-size:5.84px;color:#d2cc72;font-weight:400;text-align:right;">3 391 309,28</div>
<div class="t" style="right:233.70000000000005px;top:267.6119047619048px;font-size:5.84px;color:#d2cc72;font-weight:400;text-align:right;">3 893 985,08</div>
<div class="t" style="right:193.45000000000005px;top:267.6119047619048px;font-size:5.84px;color:#d2cc72;font-weight:400;text-align:right;">3 961 670,10</div>
<div class="t" style="right:153.20000000000005px;top:267.6119047619048px;font-size:5.84px;color:#d2cc72;font-weight:400;text-align:right;">3 961 670,10</div>
<div class="t" style="right:100.90000000000009px;top:267.6119047619048px;font-size:5.84px;color:#d2cc72;font-weight:400;text-align:right;">3 961 670,10</div>
<div class="t" style="right:595.95px;top:274.75px;font-size:5.84px;color:#222;font-weight:400;text-align:right;">1 400,00</div>
<div class="t" style="right:555.7px;top:274.75px;font-size:5.84px;color:#222;font-weight:400;text-align:right;">1 400,00</div>
<div class="t" style="right:100.90000000000009px;top:274.75px;font-size:5.84px;color:#222;font-weight:400;text-align:right;">2 800,00</div>
<div class="t" style="right:595.95px;top:281.8880952380952px;font-size:5.84px;color:#222;font-weight:400;text-align:right;">1 400,00</div>
<div class="t" style="right:555.7px;top:281.8880952380952px;font-size:5.84px;color:#222;font-weight:400;text-align:right;">1 400,00</div>
<div class="t" style="right:100.90000000000009px;top:281.8880952380952px;font-size:5.84px;color:#222;font-weight:400;text-align:right;">2 800,00</div>
<div class="t" style="right:595.95px;top:289.0261904761905px;font-size:5.84px;color:#222;font-weight:400;text-align:right;">1 400,00</div>
<div class="t" style="right:555.7px;top:289.0261904761905px;font-size:5.84px;color:#222;font-weight:400;text-align:right;">2 800,00</div>
<div class="t" style="right:515.45px;top:289.0261904761905px;font-size:5.84px;color:#222;font-weight:400;text-align:right;">2 800,00</div>
<div class="t" style="right:475.2px;top:289.0261904761905px;font-size:5.84px;color:#222;font-weight:400;text-align:right;">2 800,00</div>
<div class="t" style="right:434.95px;top:289.0261904761905px;font-size:5.84px;color:#222;font-weight:400;text-align:right;">2 800,00</div>
<div class="t" style="right:394.7px;top:289.0261904761905px;font-size:5.84px;color:#222;font-weight:400;text-align:right;">2 800,00</div>
<div class="t" style="right:354.45px;top:289.0261904761905px;font-size:5.84px;color:#222;font-weight:400;text-align:right;">2 800,00</div>
<div class="t" style="right:314.2px;top:289.0261904761905px;font-size:5.84px;color:#222;font-weight:400;text-align:right;">2 800,00</div>
<div class="t" style="right:273.95000000000005px;top:289.0261904761905px;font-size:5.84px;color:#222;font-weight:400;text-align:right;">2 800,00</div>
<div class="t" style="right:233.70000000000005px;top:289.0261904761905px;font-size:5.84px;color:#222;font-weight:400;text-align:right;">2 800,00</div>
<div class="t" style="right:193.45000000000005px;top:289.0261904761905px;font-size:5.84px;color:#222;font-weight:400;text-align:right;">2 800,00</div>
<div class="t" style="right:153.20000000000005px;top:289.0261904761905px;font-size:5.84px;color:#222;font-weight:400;text-align:right;">2 800,00</div>
<div class="t" style="right:100.90000000000009px;top:289.0261904761905px;font-size:5.84px;color:#222;font-weight:400;text-align:right;">2 800,00</div>
<div class="t" style="right:595.95px;top:296.1642857142857px;font-size:5.55px;color:#222;font-weight:700;text-align:right;">45 513,00</div>
<div class="t" style="right:555.7px;top:296.1642857142857px;font-size:5.55px;color:#222;font-weight:700;text-align:right;">348 470,00</div>
<div class="t" style="right:515.45px;top:296.1642857142857px;font-size:5.55px;color:#222;font-weight:700;text-align:right;">398 870,00</div>
<div class="t" style="right:475.2px;top:296.1642857142857px;font-size:5.55px;color:#222;font-weight:700;text-align:right;">332 870,00</div>
<div class="t" style="right:434.95px;top:296.1642857142857px;font-size:5.55px;color:#222;font-weight:700;text-align:right;">454 870,00</div>
<div class="t" style="right:394.7px;top:296.1642857142857px;font-size:5.55px;color:#222;font-weight:700;text-align:right;">369 870,00</div>
<div class="t" style="right:354.45px;top:296.1642857142857px;font-size:5.55px;color:#222;font-weight:700;text-align:right;">387 663,74</div>
<div class="t" style="right:314.2px;top:296.1642857142857px;font-size:5.55px;color:#222;font-weight:700;text-align:right;">61 873,26</div>
<div class="t" style="right:100.90000000000009px;top:296.1642857142857px;font-size:5.55px;color:#222;font-weight:700;text-align:right;">2 400 000,00</div>
<div class="t" style="right:595.95px;top:303.30238095238093px;font-size:5.55px;color:#222;font-weight:700;text-align:right;">45 513,00</div>
<div class="t" style="right:555.7px;top:303.30238095238093px;font-size:5.55px;color:#222;font-weight:700;text-align:right;">393 983,00</div>
<div class="t" style="right:515.45px;top:303.30238095238093px;font-size:5.55px;color:#222;font-weight:700;text-align:right;">792 853,00</div>
<div class="t" style="right:475.2px;top:303.30238095238093px;font-size:5.55px;color:#222;font-weight:700;text-align:right;">1 125 723,00</div>
<div class="t" style="right:434.95px;top:303.30238095238093px;font-size:5.55px;color:#222;font-weight:700;text-align:right;">1 580 593,00</div>
<div class="t" style="right:394.7px;top:303.30238095238093px;font-size:5.55px;color:#222;font-weight:700;text-align:right;">1 950 463,00</div>
<div class="t" style="right:354.45px;top:303.30238095238093px;font-size:5.55px;color:#222;font-weight:700;text-align:right;">2 338 126,74</div>
<div class="t" style="right:314.2px;top:303.30238095238093px;font-size:5.55px;color:#222;font-weight:700;text-align:right;">2 400 000,00</div>
<div class="t" style="right:273.95000000000005px;top:303.30238095238093px;font-size:5.55px;color:#222;font-weight:700;text-align:right;">2 400 000,00</div>
<div class="t" style="right:233.70000000000005px;top:303.30238095238093px;font-size:5.55px;color:#222;font-weight:700;text-align:right;">2 400 000,00</div>
<div class="t" style="right:193.45000000000005px;top:303.30238095238093px;font-size:5.55px;color:#222;font-weight:700;text-align:right;">2 400 000,00</div>
<div class="t" style="right:153.20000000000005px;top:303.30238095238093px;font-size:5.55px;color:#222;font-weight:700;text-align:right;">2 400 000,00</div>
<div class="t" style="right:100.90000000000009px;top:303.30238095238093px;font-size:5.55px;color:#222;font-weight:700;text-align:right;">2 400 000,00</div>
<div class="t" style="right:314.2px;top:310.4404761904762px;font-size:5.55px;color:#222;font-weight:700;text-align:right;">713 639,28</div>
<div class="t" style="right:273.95000000000005px;top:310.4404761904762px;font-size:5.55px;color:#222;font-weight:700;text-align:right;">274 870,00</div>
<div class="t" style="right:233.70000000000005px;top:310.4404761904762px;font-size:5.55px;color:#222;font-weight:700;text-align:right;">502 675,80</div>
<div class="t" style="right:193.45000000000005px;top:310.4404761904762px;font-size:5.55px;color:#222;font-weight:700;text-align:right;">67 685,02</div>
<div class="t" style="right:100.90000000000009px;top:310.4404761904762px;font-size:5.55px;color:#222;font-weight:700;text-align:right;">1 558 870,10</div>
<div class="t" style="right:314.2px;top:317.5785714285714px;font-size:5.55px;color:#222;font-weight:700;text-align:right;">713 639,28</div>
<div class="t" style="right:273.95000000000005px;top:317.5785714285714px;font-size:5.55px;color:#222;font-weight:700;text-align:right;">988 509,28</div>
<div class="t" style="right:233.70000000000005px;top:317.5785714285714px;font-size:5.55px;color:#222;font-weight:700;text-align:right;">1 491 185,08</div>
<div class="t" style="right:193.45000000000005px;top:317.5785714285714px;font-size:5.55px;color:#222;font-weight:700;text-align:right;">1 558 870,10</div>
<div class="t" style="right:153.20000000000005px;top:317.5785714285714px;font-size:5.55px;color:#222;font-weight:700;text-align:right;">1 558 870,10</div>
<div class="t" style="right:100.90000000000009px;top:317.5785714285714px;font-size:5.55px;color:#222;font-weight:700;text-align:right;">1 558 870,10</div>
<div class="t" style="right:595.95px;top:324.71666666666664px;font-size:5.55px;color:#222;font-weight:700;text-align:right;">5 735,00</div>
<div class="t" style="right:555.7px;top:324.71666666666664px;font-size:5.55px;color:#222;font-weight:700;text-align:right;">45 483,00</div>
<div class="t" style="right:515.45px;top:324.71666666666664px;font-size:5.55px;color:#222;font-weight:700;text-align:right;">51 853,00</div>
<div class="t" style="right:475.2px;top:324.71666666666664px;font-size:5.55px;color:#222;font-weight:700;text-align:right;">43 273,00</div>
<div class="t" style="right:434.95px;top:324.71666666666664px;font-size:5.55px;color:#222;font-weight:700;text-align:right;">59 133,00</div>
<div class="t" style="right:394.7px;top:324.71666666666664px;font-size:5.55px;color:#222;font-weight:700;text-align:right;">48 083,00</div>
<div class="t" style="right:354.45px;top:324.71666666666664px;font-size:5.55px;color:#222;font-weight:700;text-align:right;">50 396,00</div>
<div class="t" style="right:314.2px;top:324.71666666666664px;font-size:5.55px;color:#222;font-weight:700;text-align:right;">8 044,00</div>
<div class="t" style="right:100.90000000000009px;top:324.71666666666664px;font-size:5.55px;color:#222;font-weight:700;text-align:right;">312 000,00</div>
<div class="t" style="right:595.95px;top:331.8547619047619px;font-size:5.55px;color:#222;font-weight:700;text-align:right;">5 735,00</div>
<div class="t" style="right:555.7px;top:331.8547619047619px;font-size:5.55px;color:#222;font-weight:700;text-align:right;">51 218,00</div>
<div class="t" style="right:515.45px;top:331.8547619047619px;font-size:5.55px;color:#222;font-weight:700;text-align:right;">103 071,00</div>
<div class="t" style="right:475.2px;top:331.8547619047619px;font-size:5.55px;color:#222;font-weight:700;text-align:right;">146 344,00</div>
<div class="t" style="right:434.95px;top:331.8547619047619px;font-size:5.55px;color:#222;font-weight:700;text-align:right;">205 477,00</div>
<div class="t" style="right:394.7px;top:331.8547619047619px;font-size:5.55px;color:#222;font-weight:700;text-align:right;">253 560,00</div>
<div class="t" style="right:354.45px;top:331.8547619047619px;font-size:5.55px;color:#222;font-weight:700;text-align:right;">303 956,00</div>
<div class="t" style="right:314.2px;top:331.8547619047619px;font-size:5.55px;color:#222;font-weight:700;text-align:right;">312 000,00</div>
<div class="t" style="right:273.95000000000005px;top:331.8547619047619px;font-size:5.55px;color:#222;font-weight:700;text-align:right;">312 000,00</div>
<div class="t" style="right:233.70000000000005px;top:331.8547619047619px;font-size:5.55px;color:#222;font-weight:700;text-align:right;">312 000,00</div>
<div class="t" style="right:193.45000000000005px;top:331.8547619047619px;font-size:5.55px;color:#222;font-weight:700;text-align:right;">312 000,00</div>
<div class="t" style="right:153.20000000000005px;top:331.8547619047619px;font-size:5.55px;color:#222;font-weight:700;text-align:right;">312 000,00</div>
<div class="t" style="right:100.90000000000009px;top:331.8547619047619px;font-size:5.55px;color:#222;font-weight:700;text-align:right;">312 000,00</div>
<div class="t" style="right:314.2px;top:338.99285714285713px;font-size:5.55px;color:#222;font-weight:700;text-align:right;">107 046,00</div>
<div class="t" style="right:273.95000000000005px;top:338.99285714285713px;font-size:5.55px;color:#222;font-weight:700;text-align:right;">41 230,00</div>
<div class="t" style="right:233.70000000000005px;top:338.99285714285713px;font-size:5.55px;color:#222;font-weight:700;text-align:right;">75 402,00</div>
<div class="t" style="right:193.45000000000005px;top:338.99285714285713px;font-size:5.55px;color:#222;font-weight:700;text-align:right;">10 153,00</div>
<div class="t" style="right:100.90000000000009px;top:338.99285714285713px;font-size:5.55px;color:#222;font-weight:700;text-align:right;">233 831,00</div>
<div class="t" style="right:314.2px;top:346.13095238095235px;font-size:5.55px;color:#222;font-weight:700;text-align:right;">107 046,00</div>
<div class="t" style="right:273.95000000000005px;top:346.13095238095235px;font-size:5.55px;color:#222;font-weight:700;text-align:right;">148 276,00</div>
<div class="t" style="right:233.70000000000005px;top:346.13095238095235px;font-size:5.55px;color:#222;font-weight:700;text-align:right;">223 678,00</div>
<div class="t" style="right:193.45000000000005px;top:346.13095238095235px;font-size:5.55px;color:#222;font-weight:700;text-align:right;">233 831,00</div>
<div class="t" style="right:153.20000000000005px;top:346.13095238095235px;font-size:5.55px;color:#222;font-weight:700;text-align:right;">233 831,00</div>
<div class="t" style="right:100.90000000000009px;top:346.13095238095235px;font-size:5.55px;color:#222;font-weight:700;text-align:right;">233 831,00</div>
<div class="t" style="left:16.9px;top:203.36904761904762px;font-size:5.84px;color:#222;font-weight:400;">2000</div>
<div class="t" style="left:16.9px;top:210.50714285714287px;font-size:5.84px;color:#222;font-weight:400;">2002</div>
<div class="t" style="left:16.9px;top:217.64523809523808px;font-size:5.84px;color:#222;font-weight:400;">2003</div>
<div class="t" style="left:16.9px;top:224.78333333333333px;font-size:5.84px;color:#222;font-weight:400;">2012</div>
<div class="t" style="left:16.9px;top:231.92142857142858px;font-size:5.84px;color:#222;font-weight:400;">2760</div>
<div class="t" style="left:16.9px;top:246.19761904761904px;font-size:5.84px;color:#222;font-weight:400;">4800</div>
<div class="t" style="right:636.0px;top:239.0595238095238px;font-size:5.84px;color:#d23b2f;font-weight:400;text-align:right;">503</div>
<div class="t" style="left:16.9px;top:253.3357142857143px;font-size:5.55px;color:#222;font-weight:700;">Общая сумма доходов за минусом</div>
<div class="t" style="left:16.9px;top:260.47380952380956px;font-size:5.55px;color:#222;font-weight:700;">вычетов</div>
<div class="t" style="left:40.5px;width:200px;top:253.3357142857143px;font-size:5.55px;color:#222;font-weight:700;text-align:center;">За месяц</div>
<div class="t" style="left:40.5px;width:200px;top:260.47380952380956px;font-size:5.55px;color:#222;font-weight:700;text-align:center;">С начала года</div>
<div class="t" style="left:16.9px;top:267.6119047619048px;font-size:5.84px;color:#d2cc72;font-weight:400;">Доход для расчета лимита вычетов</div>
<div class="t" style="right:636.0px;top:274.75px;font-size:5.84px;color:#222;font-weight:400;text-align:right;">126/114</div>
<div class="t" style="right:636.0px;top:281.8880952380952px;font-size:5.84px;color:#222;font-weight:400;text-align:right;">за месяц</div>
<div class="t" style="right:636.0px;top:289.0261904761905px;font-size:5.84px;color:#222;font-weight:400;text-align:right;">с начала года</div>
<div class="t" style="right:686.0px;top:285.45714285714286px;font-size:5.55px;color:#222;font-weight:400;text-align:right;">Общая сумма вычетов</div>
<div class="t" style="left:-21.299999999999997px;width:200px;top:299.7333333333333px;font-size:5.55px;color:#222;font-weight:700;text-align:center;">13%</div>
<div class="t" style="left:-21.299999999999997px;width:200px;top:314.0095238095238px;font-size:5.55px;color:#222;font-weight:700;text-align:center;">15%</div>
<div class="t" style="left:120.5px;top:296.1642857142857px;font-size:5.55px;color:#222;font-weight:700;">База за месяц</div>
<div class="t" style="left:120.5px;top:303.30238095238093px;font-size:5.55px;color:#222;font-weight:700;">С начала года</div>
<div class="t" style="left:120.5px;top:310.4404761904762px;font-size:5.55px;color:#222;font-weight:700;">База за месяц</div>
<div class="t" style="left:120.5px;top:317.5785714285714px;font-size:5.55px;color:#222;font-weight:700;">С начала года</div>
<div class="t" style="left:16.9px;top:324.71666666666664px;font-size:5.55px;color:#222;font-weight:700;">НДФЛ исчисленный</div>
<div class="t" style="left:16.9px;top:338.99285714285713px;font-size:5.55px;color:#222;font-weight:700;">НДФЛ исчисленный</div>
<div class="t" style="right:636.0px;top:328.7857142857143px;font-size:5.55px;color:#222;font-weight:700;text-align:right;">13%</div>
<div class="t" style="right:636.0px;top:343.0619047619047px;font-size:5.55px;color:#222;font-weight:700;text-align:right;">15%</div>
<div style="left:444.95px;top:296.29523809523806px;width:44.65px;height:10.938095238095237px;border:1.300px solid #f3d22f;border-radius:1px;box-sizing:border-box"></div>
<svg style="left:605.05px;top:205.7px" width="3" height="3" viewBox="0 0 2 2"><path d="M0 0h2v2z" fill="#e02020"/></svg>
<svg style="left:202.55px;top:327.047619047619px" width="3" height="3" viewBox="0 0 2 2"><path d="M0 0h2v2z" fill="#e02020"/></svg>
<svg style="left:242.8px;top:327.047619047619px" width="3" height="3" viewBox="0 0 2 2"><path d="M0 0h2v2z" fill="#e02020"/></svg>
<svg style="left:202.55px;top:334.18571428571425px" width="3" height="3" viewBox="0 0 2 2"><path d="M0 0h2v2z" fill="#e02020"/></svg>
<svg style="left:524.55px;top:341.3238095238095px" width="3" height="3" viewBox="0 0 2 2"><path d="M0 0h2v2z" fill="#e02020"/></svg>
<svg style="left:564.8px;top:341.3238095238095px" width="3" height="3" viewBox="0 0 2 2"><path d="M0 0h2v2z" fill="#e02020"/></svg>
<div style="left:5px;top:492.5px;width:709px;height:16.5px;background:#b9b9b9"></div>
<svg style="left:9px;top:496px" width="12" height="10" viewBox="0 0 12 10"><rect x="3.500" y=".5" width="7.500" height="5.500" rx="1" fill="#fff" stroke="#333" stroke-width=".8"/><rect x=".5" y="3.300" width="7.500" height="5.500" rx="1" fill="#fff" stroke="#333" stroke-width=".8"/></svg>
<div class="t" style="left:24px;top:495.0px;font-size:7.05px;color:#222;font-weight:400;">Текущие вызовы: 0</div>
<div class="t" style="left:93px;top:495.0px;font-size:7.05px;color:#222;font-weight:400;">Накопленные вызовы: 580</div>
<div style="left:0;top:509.500px;width:714px;height:5.500px;overflow:hidden"><div class="t" style="left:63px;top:-1.800px;font-size:8.45px;color:#8d98a8">Для того чтобы обработка определила на кого надо сделать расшифровку надо выделить любую</div></div>
<div style="left:714.5px;top:16.5px;width:81.2px;height:493px;background:linear-gradient(#1a221d 0,#1b241f 320px,#241e1d 350px,#231e1d 100%)"></div>
<div style="left:714.5px;top:509.3px;width:81.2px;height:0.8px;background:#3a7cc4"></div>
<div style="left:797px;top:16.5px;width:3px;height:493px;background:#f4f8fc"></div>
<svg style="left:749.500px;top:23px" width="11" height="10" viewBox="0 0 11 10"><g fill="#fff"><path d="M0 1.500l4.500-.7v3.900H0z"/><path d="M5.200.7L10.500 0v4.700H5.200z"/><path d="M0 5.300h4.500v3.900L0 8.500z"/><path d="M5.200 5.300h5.300V10l-5.300-.7z"/></g></svg>
<svg style="left:748px;top:43px" width="14" height="14" viewBox="0 0 14 14"><circle cx="8" cy="5.500" r="4" fill="none" stroke="#fff" stroke-width="1.300"/><path d="M5.200 8.500L1 12.800" stroke="#fff" stroke-width="1.500"/></svg>
<svg style="left:749px;top:67px" width="12" height="10" viewBox="0 0 12 10"><g stroke="#8d9692" stroke-width=".9" fill="none"><path d="M1.500 0v9M9.500 0v9M5.500 2v7M1.500 4.500h8"/></g></svg>
<div style="left:714.5px;top:339.7px;width:81.2px;height:25.6px;background:#4a4845"></div>
<div style="left:794.3px;top:85.7px;width:2.4px;height:22.3px;background:#62a8ea"></div>
<div class="t" style="left:735.5px;top:91.0px;font-size:6.6px;color:#fff;font-weight:400;">Документы</div>
<svg style="left:721.800px;top:90.8px" width="9.500" height="12.400" viewBox="0 0 10 13"><path d="M.4.400h6.200l3 3v9.200H.4z" fill="#f6f9fc" stroke="#b8c4d0" stroke-width=".5"/><path d="M6.600.400v3h3z" fill="#cfd9e4"/><rect x="2" y="3" width="4.500" height="4.500" fill="#5b9bdc"/><rect x="3.500" y="5.500" width="3.500" height="3" fill="#9cc4ea"/><path d="M2 10h6M2 11.300h6" stroke="#aab6c2" stroke-width=".6"/></svg>
<div style="left:794.3px;top:111.12px;width:2.4px;height:22.3px;background:#62a8ea"></div>
<div class="t" style="left:735.5px;top:116.42px;font-size:6.6px;color:#fff;font-weight:400;">Temp</div>
<svg style="left:722px;top:116.52px" width="8.500" height="11.800" viewBox="0 0 8.500 11.800"><path d="M0 0h7.300l1.200 1.200v10.600H0z" fill="#f7dc74"/><path d="M0 0h2.300v11.800H0z" fill="#eec54a"/><path d="M3.600 0h1.600v8.500H3.600z" fill="#fff6cf"/><path d="M3.600 1h1.600M3.600 2.500h1.600M3.600 4h1.600M3.600 5.500h1.600M3.600 7h1.600" stroke="#c9a33a" stroke-width=".6"/><path d="M3 8.500h2.800v3.300H3z" fill="#1d231f"/></svg>
<div style="left:794.3px;top:136.54px;width:2.4px;height:22.3px;background:#62a8ea"></div>
<div class="t" style="left:735.5px;top:141.84px;font-size:6.6px;color:#fff;font-weight:400;">ФИАС_ГАР</div>
<svg style="left:722px;top:141.94px" width="8.500" height="11.800" viewBox="0 0 8.500 11.800"><path d="M0 0h7.300l1.200 1.200v10.600H0z" fill="#f7dc74"/><path d="M0 0h2.300v11.800H0z" fill="#eec54a"/><path d="M3.600 0h1.600v8.500H3.600z" fill="#fff6cf"/><path d="M3.600 1h1.600M3.600 2.500h1.600M3.600 4h1.600M3.600 5.500h1.600M3.600 7h1.600" stroke="#c9a33a" stroke-width=".6"/><path d="M3 8.500h2.800v3.300H3z" fill="#1d231f"/></svg>
<div style="left:794.3px;top:161.95999999999998px;width:2.4px;height:22.3px;background:#62a8ea"></div>
<svg style="left:748.500px;top:167.66px" width="12" height="11.600" viewBox="0 0 12 11.600"><rect x="0" y="0" width="12" height="11.600" rx=".8" fill="#e9f1e6"/><rect x=".8" y=".8" width="7.500" height="10" fill="#dfeadb"/><path d="M2 2l6.500 7.600M8.500 2L2 9.600" stroke="#27934e" stroke-width="2"/><rect x="8.500" y="1.500" width="2.700" height="8.600" fill="#fff"/><path d="M8.500 3.500h2.700M8.500 5.500h2.700M8.500 7.500h2.700" stroke="#7fbf8f" stroke-width=".5"/></svg>
<div style="left:794.3px;top:187.38px;width:2.4px;height:22.3px;background:#62a8ea"></div>
<div class="t" style="left:735.5px;top:192.68px;font-size:6.6px;color:#fff;font-weight:400;">Диспетчер задач</div>
<svg style="left:720.500px;top:192.88px" width="12.500" height="11.600" viewBox="0 0 12.500 11.600"><path d="M2.200.500h9.800l-.5 7.500H.5z" fill="#e3e9f0" stroke="#aeb8c4" stroke-width=".5"/><path d="M3 1.500h8l-.4 5.500H1.800z" fill="#c9dcf2"/><path d="M2.500 6l2-3 1.500 2.500L7.500 2.500 9 5.500l1.500-2" fill="none" stroke="#4a8ad4" stroke-width=".8"/><path d="M4.500 8h4l.8 2.500H3.700z" fill="#cfd6de"/><path d="M2.500 10.500h8v1h-8z" fill="#b8c0ca"/></svg>
<div style="left:794.3px;top:212.8px;width:2.4px;height:22.3px;background:#62a8ea"></div>
<div class="t" style="left:735.5px;top:218.10000000000002px;font-size:6.6px;color:#fff;font-weight:400;">&quot;Безымянный – ...</div>
<svg style="left:720px;top:218.40000000000003px" width="13" height="11.500" viewBox="0 0 13 11.500"><path d="M4.500.500l6.500.8L9 10.800 0.800 9z" fill="#cfe4f6" stroke="#8fb3d6" stroke-width=".5"/><path d="M5 2l5 .6M4.500 3.800l5 .7M4 5.600l5 .8M3.400 7.400l4.800.9" stroke="#5f9ad6" stroke-width=".7"/><path d="M9 10.800l2-9.500 1.200.6-2 9.600z" fill="#9aa6b2"/><path d="M5.500 5.500l2.200 2.500" stroke="#7cc66a" stroke-width="1"/></svg>
<div style="left:794.3px;top:238.22px;width:2.4px;height:22.3px;background:#62a8ea"></div>
<div class="t" style="left:735.5px;top:243.52px;font-size:6.6px;color:#fff;font-weight:400;">&quot;Безымянный – ...</div>
<svg style="left:720px;top:243.82000000000002px" width="13" height="11.500" viewBox="0 0 13 11.500"><path d="M4.500.500l6.500.8L9 10.800 0.800 9z" fill="#cfe4f6" stroke="#8fb3d6" stroke-width=".5"/><path d="M5 2l5 .6M4.500 3.800l5 .7M4 5.600l5 .8M3.400 7.400l4.800.9" stroke="#5f9ad6" stroke-width=".7"/><path d="M9 10.800l2-9.500 1.200.6-2 9.600z" fill="#9aa6b2"/><path d="M5.500 5.500l2.200 2.500" stroke="#7cc66a" stroke-width="1"/></svg>
<div style="left:794.3px;top:263.64px;width:2.4px;height:22.3px;background:#62a8ea"></div>
<div class="t" style="left:735.5px;top:268.94px;font-size:6.6px;color:#fff;font-weight:400;">Конференция &quot;1...</div>
<svg style="left:720px;top:267.94px" width="14" height="14" viewBox="0 0 14 14"><circle cx="7" cy="7" r="6.800" fill="#e2493b"/><path d="M7 7L1.200 3.500A6.800 6.800 0 0 0 6.300 13.800z" fill="#31a350"/><path d="M7 7l-.7 6.800A6.800 6.800 0 0 0 13 3.800z" fill="#f7c52f"/><path d="M7 7h6.700a6.800 6.800 0 0 0-.7-3.200H7z" fill="#e2493b"/><circle cx="7" cy="7" r="3.200" fill="#fff"/><circle cx="7" cy="7" r="2.500" fill="#4485ee"/></svg>
<div style="left:794.3px;top:289.06px;width:2.4px;height:22.3px;background:#62a8ea"></div>
<div class="t" style="left:735.5px;top:294.36px;font-size:6.6px;color:#fff;font-weight:400;">Ножницы</div>
<svg style="left:720.500px;top:294.06px" width="13.500" height="12.500" viewBox="0 0 13.500 12.500"><ellipse cx="6.500" cy="4.500" rx="5.800" ry="4" fill="#f4f4f6" stroke="#d4564e" stroke-width=".9" transform="rotate(-12 6.500 4.500)"/><path d="M2 5.500l8-3M5 2l2.500 5" stroke="#c8ccd4" stroke-width=".6"/><path d="M3 7.500l5.500 1.800" stroke="#8a8f98" stroke-width=".9"/><circle cx="9" cy="10.300" r="1.600" fill="none" stroke="#2f6fd0" stroke-width="1.100"/><circle cx="11.300" cy="8" r="1.600" fill="none" stroke="#2f6fd0" stroke-width="1.100"/><path d="M1 8.300l2.500.6" stroke="#b3413a" stroke-width="1"/></svg>
<div style="left:794.3px;top:314.48px;width:2.4px;height:22.3px;background:#62a8ea"></div>
<div class="t" style="left:735.5px;top:319.78000000000003px;font-size:6.6px;color:#fff;font-weight:400;">Конфигуратор -...</div>
<svg style="left:720px;top:319.28000000000003px" width="14" height="13" viewBox="0 0 14 13"><rect x="0" y="0" width="14" height="13" fill="#f3d02c"/><path d="M0 13V9.500l5-2 4 2.500 5-2V13z" fill="#4fae3e"/><path d="M6.500 1.500l-3 10M6.500 1.500l2.500 9.500M4.500 7h3.600" stroke="#2a2a1a" stroke-width=".9" fill="none"/><circle cx="6.500" cy="1.800" r="1" fill="#2a2a1a"/><path d="M.5.500h13v12H.5z" fill="none" stroke="#e0bd20" stroke-width=".6"/></svg>
<div style="left:794.3px;top:339.90000000000003px;width:2.4px;height:22.3px;background:#62a8ea"></div>
<div class="t" style="left:735.5px;top:345.20000000000005px;font-size:6.6px;color:#fff;font-weight:400;">[КОПИЯ] Зарпл...</div>
<svg style="left:719.500px;top:344.70000000000005px" width="15" height="14" viewBox="0 0 15 14"><circle cx="6.500" cy="6.200" r="6" fill="#f8d920"/><circle cx="10.800" cy="10" r="3.700" fill="#e5403a"/><circle cx="10.800" cy="10" r="3.700" fill="none" stroke="#f7b0a0" stroke-width=".4"/></svg>
<div class="t" style="left:624.8px;width:200px;top:343.90000000000003px;font-size:4.6px;color:#d8322c;font-weight:700;text-align:center;">1С</div>
<div class="t" style="left:630.3px;width:200px;top:349.90000000000003px;font-size:5px;color:#fff;font-weight:700;text-align:center;">3</div>
<div style="left:794.3px;top:365.32px;width:2.4px;height:22.3px;background:#62a8ea"></div>
<div class="t" style="left:735.5px;top:370.62px;font-size:6.6px;color:#fff;font-weight:400;">[КОПИЯ] Зарпл...</div>
<svg style="left:719.500px;top:370.12px" width="15" height="14" viewBox="0 0 15 14"><circle cx="6.500" cy="6.200" r="6" fill="#f8d920"/><circle cx="10.800" cy="10" r="3.700" fill="#e5403a"/><circle cx="10.800" cy="10" r="3.700" fill="none" stroke="#f7b0a0" stroke-width=".4"/></svg>
<div class="t" style="left:624.8px;width:200px;top:369.32px;font-size:4.6px;color:#d8322c;font-weight:700;text-align:center;">1С</div>
<div class="t" style="left:630.3px;width:200px;top:375.32px;font-size:5px;color:#fff;font-weight:700;text-align:center;">3</div>
<div style="left:714.5px;top:404.6px;width:81.2px;height:8.5px;background:#f1f1f1"></div>
<div style="left:724.2px;top:405.2px;width:31.3px;height:7.3px;background:#c6c6c6"></div>
<svg style="left:717px;top:406.300px" width="5" height="5" viewBox="0 0 5 5"><path d="M3.500.500L1.300 2.500l2.200 2" fill="none" stroke="#333" stroke-width="1"/></svg>
<svg style="left:788.500px;top:406.300px" width="5" height="5" viewBox="0 0 5 5"><path d="M1.500.500l2.200 2-2.200 2" fill="none" stroke="#333" stroke-width="1"/></svg>
<svg style="left:720px;top:414px" width="52" height="12" viewBox="0 0 52 12"><g stroke="#e6e6e6" fill="none" stroke-width=".9"><path d="M5.700 3L2.500 6.300l3.200 3.300"/><rect x="15.300" y="3.300" width="5" height="5.500" rx=".8"/><path d="M14.800 10.600h6M16 2h3.600"/><circle cx="17.800" cy="6" r="1.100" fill="#e6e6e6" stroke="none"/><rect x="28.500" y="3" width="6.300" height="4.600"/><path d="M27 2.600l1 4 2.300 3.200M30 9.800h4.500M32 7.600v2.200"/><path d="M39.500 5.200h1.700l2.300-2v6.600l-2.300-2h-1.700z"/><path d="M45.300 4.300c.9 1.300.9 3.100 0 4.400M47 3c1.600 2 1.600 5 0 7"/></g></svg>
<div class="t" style="left:655px;width:200px;top:429.3px;font-size:6.3px;color:#fff;font-weight:400;text-align:center;">РУС</div>
<div class="t" style="left:655px;width:200px;top:450.0px;font-size:6.3px;color:#fff;font-weight:400;text-align:center;">16:49</div>
<div class="t" style="left:655px;width:200px;top:460.0px;font-size:6.3px;color:#fff;font-weight:400;text-align:center;">вторник</div>
<div class="t" style="left:655px;width:200px;top:469.7px;font-size:6.3px;color:#fff;font-weight:400;text-align:center;">28.10.2025</div>
<svg style="left:749.500px;top:488.500px" width="11" height="10" viewBox="0 0 11 10"><path d="M.8.800h9.400v6.400H6.500L5.500 8.500 4.500 7.200H.8z" fill="none" stroke="#eee" stroke-width=".8"/></svg>
<svg style="left:591.500px;top:8.500px" width="8" height="11" viewBox="0 0 8 11"><path d="M.5.500v8.200l2-1.800 1.300 3 1.300-.6-1.300-2.900h2.700z" fill="#fff" stroke="#222" stroke-width=".7"/></svg>
<div class="t" style="left:-1.5px;top:-2.2px;font-size:5px;color:#777;font-weight:400;">ь</div>
<div class="t" style="left:797px;top:-2.0px;font-size:5px;color:#555;font-weight:400;">&#x27;%</div>
</div></body></html>
